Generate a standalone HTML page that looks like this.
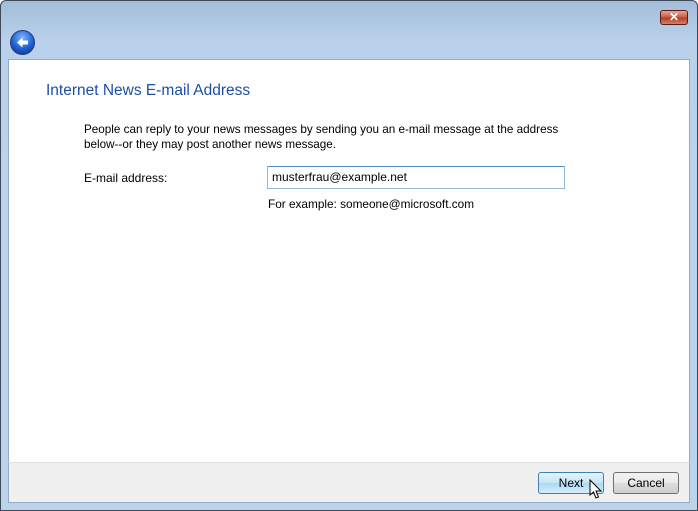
<!DOCTYPE html>
<html><head><meta charset="utf-8"><style>
*{margin:0;padding:0;box-sizing:border-box}
body{width:698px;height:511px;overflow:hidden;font-family:"Liberation Sans",sans-serif;font-size:12px;color:#000;position:relative;background:#fff}
.frame{position:absolute;left:0;top:0;width:698px;height:511px;border:1px solid #3c4a5a;border-radius:6px 6px 0 0;background:linear-gradient(#a3bcd8 0,#b9d1ea 40px,#bcd3ec 100%)}
.content{position:absolute;left:8px;top:59px;width:682px;height:403px;background:#fff;border:1px solid #94aac6;border-bottom:none}
.footer{position:absolute;left:8px;top:462px;width:682px;height:41px;background:#f0f0f0;border-top:1px solid #dfdfdf;border-left:1px solid #94aac6;border-right:1px solid #94aac6;border-bottom:1px solid #94aac6}
.t{position:absolute;white-space:nowrap}
.btn{position:absolute;height:22px;border-radius:3px;text-align:center;line-height:20px;font-size:12px}
</style></head><body>
<div class="frame"></div>
<div style="position:absolute;left:660px;top:10px;width:28px;height:15px;border:1px solid #5a1c14;border-radius:3px;background:linear-gradient(#e6a493,#c55a43 50%,#b23a22 51%,#d0826c);color:#fff;font-size:12px;font-weight:bold;text-align:center;line-height:13px">✕</div>
<div style="position:absolute;left:10px;top:30px;width:25px;height:25px;border-radius:50%;background:radial-gradient(circle at 50% 30%,#7fb4ff,#1e5fd0 55%,#0a2f8a);border:1px solid #1d3f7a"></div>
<svg style="position:absolute;left:13px;top:33px" width="19" height="19" viewBox="0 0 19 19"><path d="M4 9.5 L9.5 4.5 L9.5 7.5 L15 7.5 L15 11.5 L9.5 11.5 L9.5 14.5 Z" fill="#fff"/></svg>
<div class="content"></div>
<div class="t" style="left:46px;top:82px;font-size:15.5px;color:#1c4ea8">Internet News E-mail Address</div>
<div class="t" style="left:84px;top:122px;line-height:15px;font-size:11.7px">People can reply to your news messages by sending you an e-mail message at the address<br>below--or they may post another news message.</div>
<div class="t" style="left:84px;top:171px">E-mail address:</div>
<div style="position:absolute;left:267px;top:166px;width:298px;height:23px;border:1px solid #8eb7d9;border-top-color:#5b8fc0;padding:3px 4px;font-size:12px">musterfrau@example.net</div>
<div class="t" style="left:268px;top:197px;font-size:11.8px">For example: someone@microsoft.com</div>
<div class="footer"></div>
<div class="btn" style="left:538px;top:472px;width:66px;border:1px solid #3c7fb1;background:linear-gradient(#e5f4fc,#c4e5f6 50%,#a9d9f2 51%,#d6eefb)">Next</div>
<div class="btn" style="left:613px;top:472px;width:66px;border:1px solid #707070;background:linear-gradient(#f2f2f2,#ebebeb 50%,#dddddd 51%,#cfcfcf)">Cancel</div>
<svg style="position:absolute;left:589px;top:479px" width="14" height="22" viewBox="0 0 14 22"><path d="M1 1 L1 16 L4.5 13 L7 19 L9.5 18 L7 12 L12 12 Z" fill="#fff" stroke="#000" stroke-width="1"/></svg>
</body></html>
